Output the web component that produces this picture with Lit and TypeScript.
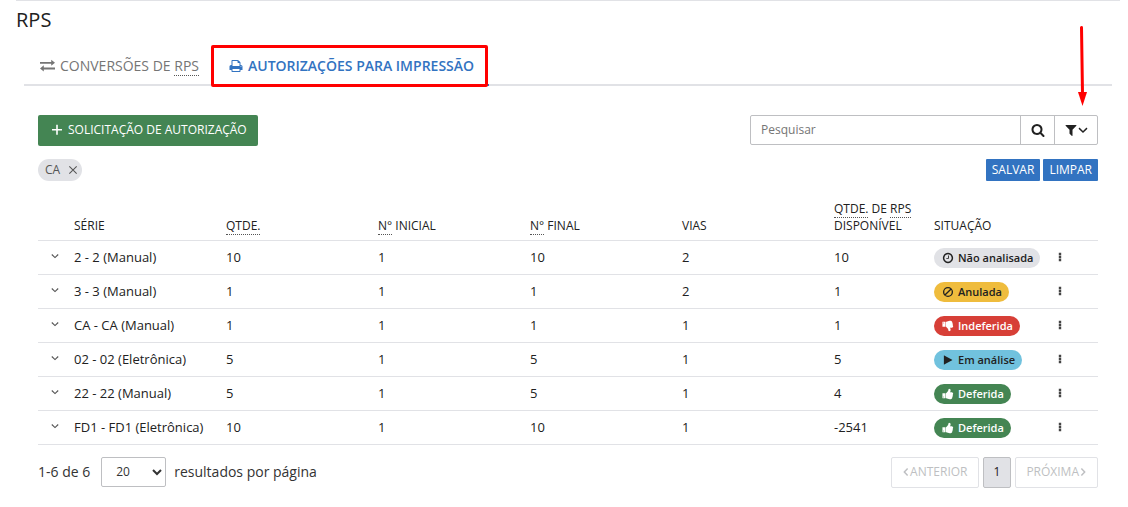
import { LitElement, html, css, svg } from "lit";
import { customElement, state } from "lit/decorators.js";
import { classMap } from "lit/directives/class-map.js";

const THUMB =
  "M320 1344q0-26-19-45t-45-19q-27 0-45.5 19t-18.5 45q0 27 18.5 45.5t45.5 18.5q26 0 45-18.5t19-45.5zm160-512v640q0 26-19 45t-45 19h-288q-26 0-45-19t-19-45v-640q0-26 19-45t45-19h288q26 0 45 19t19 45zm1184 0q0 86-55 149 15 44 15 76 3 76-43 137 17 56 0 117-15 57-54 94 9 112-49 181-64 76-197 78h-129q-66 0-144-15.5t-121.5-29-120.5-39.5q-123-43-158-44-26-1-45-19.5t-19-44.5v-641q0-25 18-43.5t43-20.5q24-2 76-59t101-121q68-87 101-120 18-18 31-48t17.5-48.5 13.5-60.5q7-39 12.5-61t19.5-52 34-50q19-19 45-19 46 0 82.5 10.5t60 26 40 40.5 24 45 12 50 5 45 .5 39q0 38-9.5 76t-19 60-27.5 56q-3 6-10 18t-11 22-8 24h277q78 0 135 57t57 135z";

const shapes: Record<string, unknown> = {
  search: svg`<path d="M1216 832q0-185-131.5-316.5t-316.5-131.5-316.5 131.5-131.5 316.5 131.5 316.5 316.5 131.5 316.5-131.5 131.5-316.5zm512 832q0 52-38 90t-90 38q-54 0-90-38l-343-342q-179 124-399 124-143 0-273.5-55.5t-225-150-150-225-55.5-273.5 55.5-273.5 150-225 225-150 273.5-55.5 273.5 55.5 225 150 150 225 55.5 273.5q0 220-124 399l343 343q37 37 37 90z"/>`,
  filter: svg`<path d="M1595 295q17 41-14 70l-493 493v742q0 42-39 59-13 5-25 5-27 0-45-19l-256-256q-19-19-19-45v-486l-493-493q-31-29-14-70 17-39 59-39h1280q42 0 59 39z"/>`,
  print: svg`<path d="M448 1536h896v-256h-896v256zm0-640h896v-384h-160q-40 0-68-28t-28-68v-160h-640v640zm1152 64q0-26-19-45t-45-19-45 19-19 45 19 45 45 19 45-19 19-45zm128 0v416q0 13-9.5 22.5t-22.5 9.5h-224v160q0 40-28 68t-68 28h-960q-40 0-68-28t-28-68v-160h-224q-13 0-22.5-9.5t-9.5-22.5v-416q0-79 56.5-135.5t135.5-56.5h64v-544q0-40 28-68t68-28h672q40 0 88 20t76 48l152 152q28 28 48 76t20 88v256h64q79 0 135.5 56.5t56.5 135.5z"/>`,
  exchange: svg`<path d="M0 470h1340v-250l452 360-452 360v-240h-1340zM1792 1130h-1340v-250l-452 360 452 360v-240h1340z"/>`,
  plus: svg`<path d="M1640 756v212q0 20-20 20h-604v604q0 20-20 20h-200q-20 0-20-20v-604h-604q-20 0-20-20v-212q0-20 20-20h604v-604q0-20 20-20h200q20 0 20 20v604h604q20 0 20 20z"/>`,
  clock: svg`<path d="M1024 544v448q0 14-9 23t-23 9h-320q-14 0-23-9t-9-23v-64q0-14 9-23t23-9h224v-352q0-14 9-23t23-9h64q14 0 23 9t9 23zm416 352q0-148-73-273t-198-198-273-73-273 73-198 198-73 273 73 273 198 198 273 73 273-73 198-198 73-273zm224 0q0 209-103 385.5t-279.5 279.5-385.5 103-385.5-103-279.5-279.5-103-385.5 103-385.5 279.5-279.5 385.5-103 385.5 103 279.5 279.5 103 385.5z"/>`,
  ban: svg`<path fill="none" stroke="currentColor" stroke-width="200" d="M1549 896a653 653 0 1 1-1306 0a653 653 0 1 1 1306 0M434 1358L1358 434"/>`,
  play: svg`<path d="M1510 925l-1180 656q-20 12-35 3t-15-32v-1312q0-23 15-32t35 3l1180 656q20 12 20 29t-20 29z"/>`,
  up: svg`<path d="${THUMB}"/>`,
  down: svg`<path transform="matrix(1 0 0 -1 0 1792)" d="${THUMB}"/>`,
  chevron: svg`<path fill="none" stroke="currentColor" stroke-width="250" d="M180 560L896 1240L1612 560"/>`,
  left: svg`<path fill="none" stroke="currentColor" stroke-width="330" d="M1260 130L520 896L1260 1662"/>`,
  right: svg`<path fill="none" stroke="currentColor" stroke-width="330" d="M532 130L1272 896L532 1662"/>`,
  close: svg`<path fill="none" stroke="currentColor" stroke-width="190" d="M240 240L1552 1552M1552 240L240 1552"/>`,
  dots: svg`<path d="M680 130h432v432h-432zM680 680h432v432h-432zM680 1230h432v432h-432z"/>`,
};

const icon = (name: string, size = "") =>
  html`<svg class="icon ${size}" viewBox="0 0 1792 1792" aria-hidden="true">${shapes[name]}</svg>`;

interface Row {
  serie: string;
  values: string[];
  status: string;
  tone: string;
  icon: string;
}

const row = (serie: string, values: string, status: string, tone: string, ic: string): Row => ({
  serie,
  values: values.split(" "),
  status,
  tone,
  icon: ic,
});

const ROWS: Row[] = [
  row("2 - 2 (Manual)", "10 1 10 2 10", "Não analisada", "neutral", "clock"),
  row("3 - 3 (Manual)", "1 1 1 2 1", "Anulada", "warning", "ban"),
  row("CA - CA (Manual)", "1 1 1 1 1", "Indeferida", "danger", "down"),
  row("02 - 02 (Eletrônica)", "5 1 5 1 5", "Em análise", "info", "play"),
  row("22 - 22 (Manual)", "5 1 5 1 4", "Deferida", "success", "up"),
  row("FD1 - FD1 (Eletrônica)", "10 1 10 1 -2541", "Deferida", "success", "up"),
];

@customElement("app-root")
export class AppRoot extends LitElement {
  @state() private tags = ["CA"];

  static styles = css`
    :host {
      display: block;
      padding: 0 8px 16px 16px;
      background: #fff;
      color: #212121;
      font-family: "Open Sans", "Noto Sans", sans-serif;
      font-size: 13px;
      line-height: 18px;
    }
    * { box-sizing: border-box; }
    button, input, select { font: inherit; color: inherit; margin: 0; }
    button { cursor: pointer; border: 0; padding: 0; background: none; }
    .icon { width: 14px; height: 14px; fill: currentColor; flex: none; display: block; }
    .s8 { width: 8px; height: 8px; }
    .s10 { width: 10px; height: 10px; }
    .s12 { width: 12px; height: 12px; }
    .s15 { width: 15px; height: 15px; }
    abbr { text-decoration: none; border-bottom: 1px dotted #555; }
    h1 {
      margin: 0;
      padding: 6px 0 0;
      border-top: 1px solid #e1e2e6;
      font-size: 20px;
      font-weight: 400;
      line-height: 26px;
    }
    .tabs {
      display: flex;
      margin: 14px 8px 0;
      border-bottom: 2px solid #e1e2e6;
    }
    .tab {
      position: relative;
      display: flex;
      align-items: center;
      gap: 5px;
      height: 39px;
      margin-bottom: -2px;
      padding: 0 15px;
      color: #757575;
      font-size: 14px;
      line-height: 19px;
      text-decoration: none;
      border-bottom: 2px solid transparent;
    }
    .tab:first-child { padding-left: 16px; }
    .tab.active { color: #3273c1; font-weight: 600; border-color: #3273c1; }
    .tab abbr { display: inline-block; }
    .highlight {
      position: absolute;
      inset: -2px 1px -3px -3px;
      border: 3px solid #f00;
      border-radius: 2px;
      pointer-events: none;
    }
    main { margin: 29px 22px 0; }
    .bar { display: flex; align-items: center; justify-content: space-between; }
    .top { align-items: flex-start; }
    .primary {
      display: flex;
      align-items: center;
      gap: 5px;
      height: 31px;
      padding: 0 11px 2px 13px;
      border-radius: 2px;
      background: #448553;
      color: #fff;
      font-size: 12px;
      font-weight: 500;
    }
    .search {
      display: flex;
      width: 348px;
      height: 30px;
      border: 1px solid #bebfc2;
      border-radius: 2px;
    }
    .search input {
      flex: 1;
      min-width: 0;
      border: 0;
      padding: 0 10px;
      background: none;
      font-size: 12px;
      outline-offset: -1px;
    }
    .search input::placeholder { color: #757575; opacity: 1; }
    .search button {
      position: relative;
      display: flex;
      align-items: center;
      justify-content: center;
      width: 34px;
      border-left: 1px solid #bebfc2;
    }
    .search .filter { width: 43px; }
    .arrow {
      position: absolute;
      right: 8px;
      bottom: 38px;
      width: 14px;
      height: 82px;
      pointer-events: none;
    }
    .filters { margin-top: 13px; }
    .tag {
      display: flex;
      align-items: center;
      gap: 8px;
      height: 22px;
      padding: 0 4px 0 7px;
      border-radius: 11px;
      background: #e1e2e6;
      color: #555;
      font-size: 12px;
    }
    .actions { display: flex; gap: 3px; }
    .actions button {
      height: 22px;
      padding: 0 6px;
      border-radius: 1px;
      background: #3273c1;
      color: #fff;
      font-size: 12px;
      font-weight: 500;
    }
    table {
      width: 100%;
      margin-top: 16px;
      border-collapse: collapse;
      table-layout: fixed;
    }
    .c-expand { width: 28px; }
    .c-avail { width: 100px; }
    .c-status { width: 121px; }
    .c-menu { width: 51px; }
    th {
      height: 43px;
      padding: 0 8px 6px;
      text-align: left;
      vertical-align: bottom;
      font-size: 12px;
      font-weight: 500;
      line-height: 17px;
    }
    td { height: 34px; padding: 0 8px; white-space: nowrap; }
    tr { border-bottom: 1px solid #e1e2e6; }
    .expand { display: block; color: #555; margin-left: 5px; padding-bottom: 2px; }
    .menu { display: block; color: #444; }
    .badge {
      display: flex;
      align-items: center;
      gap: 4px;
      width: max-content;
      height: 20px;
      margin-top: 1px;
      padding: 0 7px 0 8px;
      border-radius: 10px;
      font-size: 11px;
      font-weight: 600;
    }
    .neutral { background: #e1e2e6; }
    .warning { background: #efbc3d; }
    .info { background: #71c2de; }
    .danger { background: #d73f37; color: #fff; }
    .success { background: #448553; color: #fff; }
    footer { margin-top: 12px; font-size: 14px; color: #333; }
    .size { display: flex; align-items: center; gap: 8px; padding-bottom: 2px; }
    .size label { display: flex; align-items: center; gap: 11px; }
    select {
      width: 65px;
      height: 30px;
      padding: 0 0 0 10px;
      border: 1px solid #bebfc2;
      border-radius: 2px;
      background: #fff;
      font-size: 12px;
    }
    nav { display: flex; gap: 4px; }
    nav button {
      display: flex;
      align-items: center;
      height: 31px;
      padding: 0 10px 2px;
      border: 1px solid #e1e2e6;
      border-radius: 2px;
      font-size: 12px;
      color: #bebfc2;
    }
    nav .page { background: #e1e2e6; border-color: #bebfc2; color: #212121; }
  `;

  private removeTag(tag: string) {
    this.tags = this.tags.filter((t) => t !== tag);
  }

  render() {
    return html`
      <h1>RPS</h1>
      <div class="tabs">
        <a class="tab" href="#conversoes">${icon("exchange", "s15")}<span>CONVERSÕES DE <abbr>RPS</abbr></span></a>
        <a class=${classMap({ tab: true, active: true })} href="#autorizacoes">
          ${icon("print")}<span>AUTORIZAÇÕES PARA IMPRESSÃO</span><span class="highlight"></span>
        </a>
      </div>
      <main>
        <div class="bar top">
          <button class="primary">${icon("plus", "s12")}SOLICITAÇÃO DE AUTORIZAÇÃO</button>
          <div class="search" role="search">
            <input type="text" placeholder="Pesquisar" aria-label="Pesquisar" />
            <button aria-label="Buscar">${icon("search")}</button>
            <button class="filter" aria-label="Filtros">
              ${icon("filter")}${icon("chevron", "s10")}
              <svg class="arrow" viewBox="0 0 14 82" aria-hidden="true">
                <path d="M6.5 3.5L7.5 70" stroke="#f00" stroke-width="3" stroke-linecap="round" />
                <path d="M3 68h9L7.5 82z" fill="#f00" />
              </svg>
            </button>
          </div>
        </div>
        <div class="bar filters">
          <div>
            ${this.tags.map(
              (t) => html`<span class="tag">${t}<button aria-label="Remover ${t}" @click=${() => this.removeTag(t)}>${icon("close", "s10")}</button></span>`
            )}
          </div>
          <div class="actions"><button>SALVAR</button><button>LIMPAR</button></div>
        </div>
        <table>
          <colgroup>
            <col class="c-expand" /><col /><col /><col /><col /><col />
            <col class="c-avail" /><col class="c-status" /><col class="c-menu" />
          </colgroup>
          <thead>
            <tr>
              <th></th>
              <th>SÉRIE</th>
              <th><abbr>QTDE.</abbr></th>
              <th><abbr>N°</abbr> INICIAL</th>
              <th><abbr>N°</abbr> FINAL</th>
              <th>VIAS</th>
              <th><abbr>QTDE.</abbr> DE <abbr>RPS</abbr> DISPONÍVEL</th>
              <th>SITUAÇÃO</th>
              <th></th>
            </tr>
          </thead>
          <tbody>
            ${ROWS.map(
              (r) => html`<tr>
                <td><button class="expand" aria-label="Expandir">${icon("chevron", "s8")}</button></td>
                <td>${r.serie}</td>
                ${r.values.map((v) => html`<td>${v}</td>`)}
                <td><span class="badge ${r.tone}">${icon(r.icon, "s12")}${r.status}</span></td>
                <td><button class="menu" aria-label="Opções">${icon("dots", "s10")}</button></td>
              </tr>`
            )}
          </tbody>
        </table>
        <footer class="bar">
          <div class="size">
            <label>1-6 de 6 <select><option>20</option></select></label>
            <span>resultados por página</span>
          </div>
          <nav aria-label="Paginação">
            <button disabled>${icon("left", "s8")}ANTERIOR</button>
            <button class="page">1</button>
            <button disabled>PRÓXIMA${icon("right", "s8")}</button>
          </nav>
        </footer>
      </main>
    `;
  }
}
